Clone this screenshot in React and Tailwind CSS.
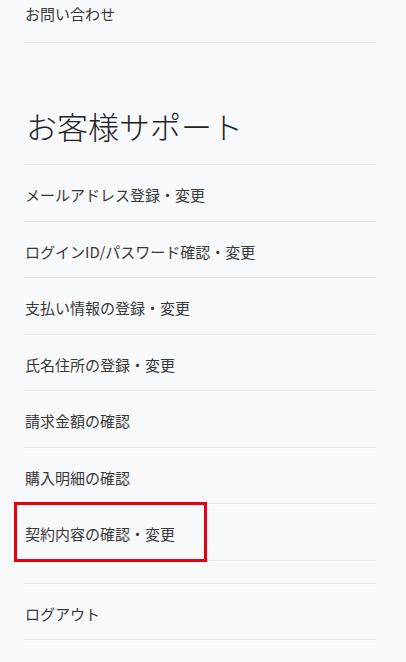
const items = [
  "メールアドレス登録・変更",
  "ログインID/パスワード確認・変更",
  "支払い情報の登録・変更",
  "氏名住所の登録・変更",
  "請求金額の確認",
  "購入明細の確認",
];

function Row({ children, highlight }) {
  return (
    <div className="relative h-[56.5px] pt-[20px] border-b border-[#e3e5e8] shadow-[0_1px_0_#ffffff]">
      <span className="block pl-px text-[15px] leading-5 text-[#383838]">{children}</span>
      {highlight && (
        <div className="absolute left-[-10px] top-[-2px] w-[193px] h-[60px] border-[3px] border-[#e60012]" />
      )}
    </div>
  );
}

export default function App() {
  return (
    <div
      className="min-h-[662px] w-[406px] bg-[#f8f9fb] overflow-hidden"
      style={{ fontFamily: '"Noto Sans CJK JP", "Noto Sans", sans-serif' }}
    >
      <div className="ml-6 w-[352px]">
        <div className="h-[42.5px] pt-[4px] border-b border-[#e3e5e8] shadow-[0_1px_0_#ffffff]">
          <span className="block pl-px text-[15px] leading-5 text-[#383838]">お問い合わせ</span>
        </div>

        <div className="h-[122.5px] pt-[63px] border-b border-[#e3e5e8] shadow-[0_1px_0_#ffffff]">
          <h1 className="pl-[2px] text-[31px] leading-10 font-light text-[#222]">お客様サポート</h1>
        </div>

        {items.map((t) => (
          <Row key={t}>{t}</Row>
        ))}
        <Row highlight>契約内容の確認・変更</Row>

        <div className="h-[23px] border-b border-[#e3e5e8] shadow-[0_1px_0_#ffffff]" />
        <Row>ログアウト</Row>
      </div>
    </div>
  );
}
